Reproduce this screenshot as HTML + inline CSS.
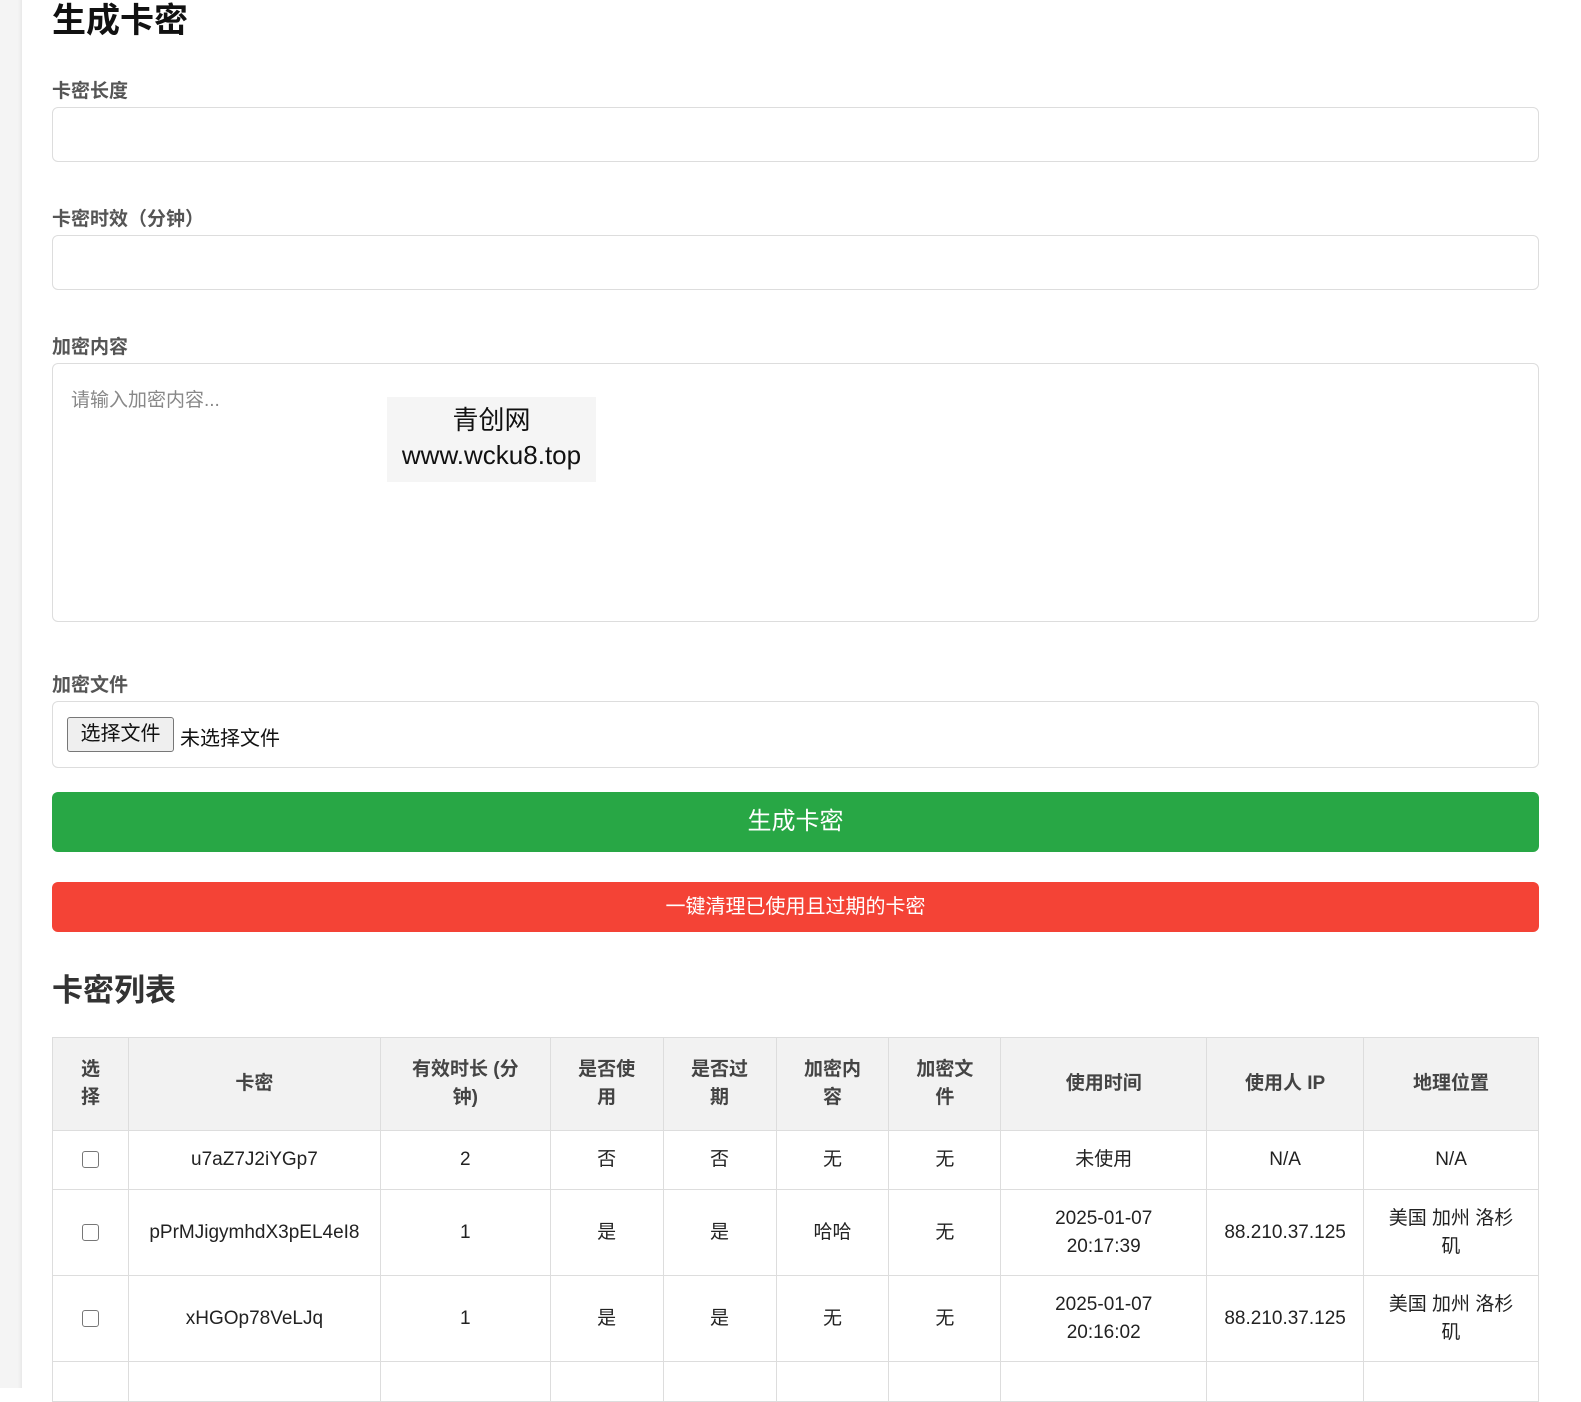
<!DOCTYPE html>
<html><head><meta charset="utf-8"><style>
*{box-sizing:border-box;margin:0;padding:0}
body{width:1581px;height:1388px;overflow:hidden;background:#fff;font-family:"Liberation Sans","Noto Sans CJK SC",sans-serif;position:relative}
.strip{position:absolute;left:0;top:0;width:22px;height:1388px;background:linear-gradient(to right,#f4f4f4,#f4f4f4 18px,#e9e9e9)}
.a{position:absolute}
h1{position:absolute;left:52px;top:0;font-size:34px;font-weight:bold;color:#111;line-height:42px}
.lbl{position:absolute;left:52px;font-size:19px;font-weight:bold;color:#555}
.box{position:absolute;left:52px;width:1487px;border:1px solid #ddd;border-radius:6px;background:#fff}
.btn{position:absolute;left:52px;width:1487px;border-radius:6px;color:#fff;text-align:center}
table{position:absolute;left:52px;top:1037px;border-collapse:collapse;width:1487px;font-size:19px;color:#222}
td,th{border:1px solid #ddd;text-align:center;padding:0 12px;line-height:28px}
th{background:#f2f2f2;color:#444;font-weight:bold;height:93px}
.cb{display:inline-block;width:17px;height:17px;border:1px solid #777;border-radius:3px;vertical-align:middle}
</style></head><body>
<div class="strip"></div>
<h1>生成卡密</h1>
<div class="lbl" style="top:76px">卡密长度</div>
<div class="box" style="top:107px;height:55px"></div>
<div class="lbl" style="top:204px">卡密时效（分钟）</div>
<div class="box" style="top:235px;height:55px"></div>
<div class="lbl" style="top:332px">加密内容</div>
<div class="box" style="top:363px;height:259px"></div>
<div class="a" style="left:71px;top:385px;font-size:19px;color:#888">请输入加密内容...</div>
<div class="a" style="left:387px;top:397px;width:209px;height:85px;background:#f5f5f5;text-align:center;font-size:26px;line-height:35px;color:#111;padding-top:6px">青创网<br>www.wcku8.top</div>
<div class="lbl" style="top:670px">加密文件</div>
<div class="box" style="top:701px;height:67px"></div>
<div class="a" style="left:67px;top:717px;width:107px;height:35px;border:1px solid #777;border-radius:3px;background:#efefef;font-size:20px;text-align:center;line-height:33px;color:#111">选择文件</div>
<div class="a" style="left:180px;top:722px;font-size:20px;color:#111">未选择文件</div>
<div class="btn" style="top:792px;height:60px;background:#28a745;font-size:24px;line-height:60px">生成卡密</div>
<div class="btn" style="top:882px;height:50px;background:#f44336;font-size:20px;line-height:50px">一键清理已使用且过期的卡密</div>
<div class="a" style="left:52px;top:965px;font-size:31px;font-weight:bold;color:#333">卡密列表</div>
<table>
<colgroup><col style="width:76px"><col style="width:252px"><col style="width:170px"><col style="width:113px"><col style="width:113px"><col style="width:113px"><col style="width:112px"><col style="width:206px"><col style="width:157px"><col style="width:175px"></colgroup>
<tr><th>选<br>择</th><th>卡密</th><th>有效时长 (分<br>钟)</th><th>是否使<br>用</th><th>是否过<br>期</th><th>加密内<br>容</th><th>加密文<br>件</th><th>使用时间</th><th>使用人 IP</th><th>地理位置</th></tr>
<tr style="height:59px"><td><span class="cb"></span></td><td>u7aZ7J2iYGp7</td><td>2</td><td>否</td><td>否</td><td>无</td><td>无</td><td>未使用</td><td>N/A</td><td>N/A</td></tr>
<tr style="height:86px"><td><span class="cb"></span></td><td>pPrMJigymhdX3pEL4eI8</td><td>1</td><td>是</td><td>是</td><td>哈哈</td><td>无</td><td>2025-01-07<br>20:17:39</td><td>88.210.37.125</td><td>美国 加州 洛杉<br>矶</td></tr>
<tr style="height:86px"><td><span class="cb"></span></td><td>xHGOp78VeLJq</td><td>1</td><td>是</td><td>是</td><td>无</td><td>无</td><td>2025-01-07<br>20:16:02</td><td>88.210.37.125</td><td>美国 加州 洛杉<br>矶</td></tr>
<tr style="height:40px"><td></td><td></td><td></td><td></td><td></td><td></td><td></td><td></td><td></td><td></td></tr>
</table>
</body></html>
